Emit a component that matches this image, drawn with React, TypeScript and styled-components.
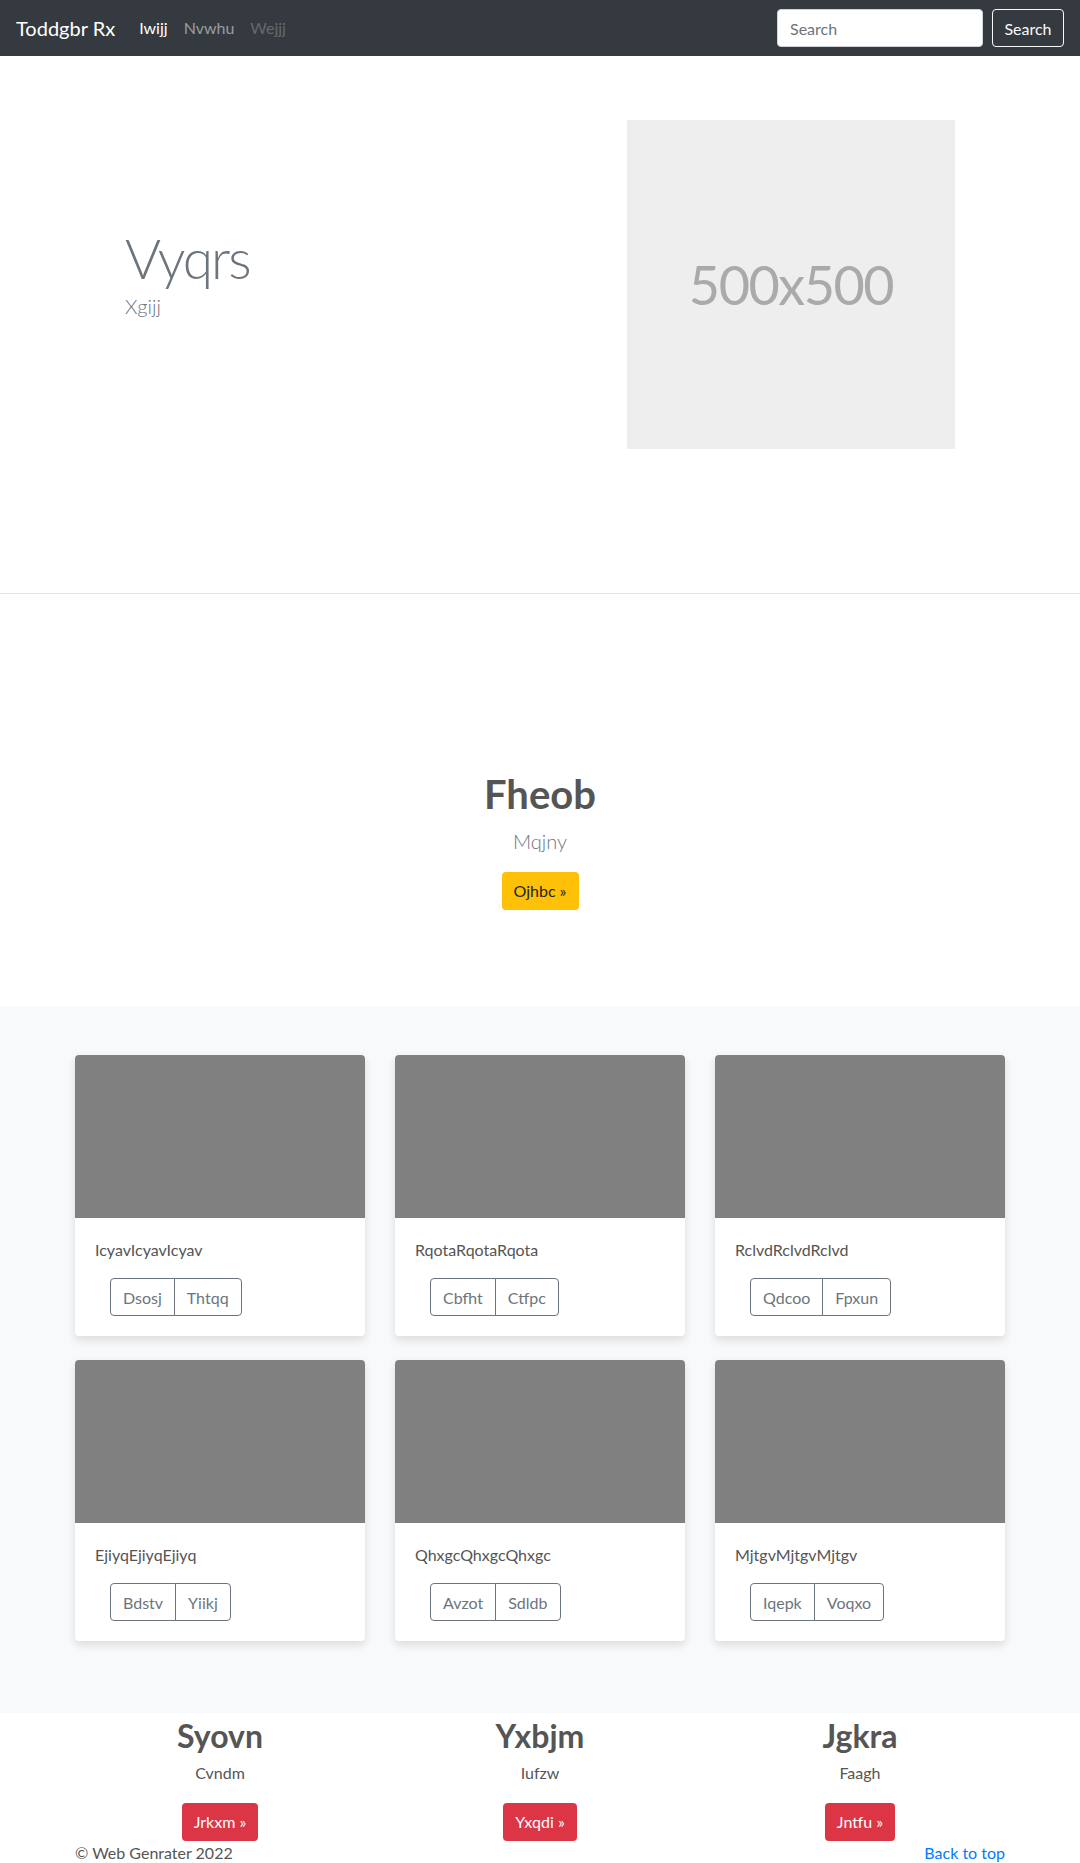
import React from 'react';
import styled, { createGlobalStyle } from 'styled-components';

const GlobalStyle = createGlobalStyle`
  * { box-sizing: border-box; }
  body {
    margin: 0;
    font-family: Lato, "Open Sans", sans-serif;
    font-size: 16px;
    line-height: 1.5;
    color: #212529;
    background: #fff;
  }
`;

const Navbar = styled.nav`
  height: 56px;
  background: #343a40;
  display: flex;
  align-items: center;
  padding: 0 16px;
`;

const Brand = styled.a`
  color: #fff;
  font-size: 20px;
  margin-right: 16px;
  text-decoration: none;
  white-space: nowrap;
`;

const NavLinks = styled.div`
  display: flex;
  flex: 1;
`;

const NavLink = styled.a<{ $state?: 'active' | 'disabled' }>`
  padding: 8px;
  font-size: 16px;
  text-decoration: none;
  color: ${p =>
    p.$state === 'active'
      ? '#fff'
      : p.$state === 'disabled'
      ? 'rgba(255,255,255,.25)'
      : 'rgba(255,255,255,.5)'};
`;

const SearchForm = styled.form`
  display: flex;
  align-items: center;
  gap: 9px;
`;

const SearchInput = styled.input`
  width: 206px;
  height: 38px;
  padding: 6px 12px;
  border: 1px solid #ced4da;
  border-radius: 4px;
  font-family: inherit;
  font-size: 16px;
  color: #495057;
  &::placeholder { color: #6c757d; }
`;

const OutlineLightButton = styled.button`
  height: 38px;
  width: 72px;
  padding: 0;
  background: transparent;
  border: 1px solid #f8f9fa;
  border-radius: 4px;
  color: #f8f9fa;
  font-family: inherit;
  font-size: 16px;
`;

const Hero = styled.section`
  border-bottom: 1px solid #e5e5e5;
`;

const HeroInner = styled.div`
  max-width: 960px;
  margin: 0 auto;
  padding: 64px 65px 144px;
  display: grid;
  grid-template-columns: 1fr 328px;
  align-items: center;
`;

const HeroText = styled.div`
  padding-bottom: 24px;
`;

const DisplayTitle = styled.h1`
  margin: 0;
  font-size: 55px;
  font-weight: 300;
  letter-spacing: -2px;
  line-height: 1.2;
  color: #6c757d;
`;

const HeroLead = styled.p`
  margin: 0;
  font-size: 20px;
  font-weight: 300;
  color: #6c757d;
`;

const Placeholder = styled.div`
  width: 328px;
  height: 329px;
  background: #eee;
  color: #aaa;
  display: flex;
  align-items: center;
  justify-content: center;
  font-size: 54px;
  letter-spacing: -1.5px;
`;

const Feature = styled.section`
  padding: 176px 0 96px;
  text-align: center;
`;

const FeatureTitle = styled.h1`
  margin: 0 0 8px;
  font-size: 40px;
  font-weight: 700;
  line-height: 1.2;
  color: #555;
`;

const Lead = styled.p`
  margin: 0 0 16px;
  font-size: 20px;
  font-weight: 300;
  line-height: 1.5;
  color: #6c757d;
`;

const SolidButton = styled.a<{ $variant: 'warning' | 'danger' }>`
  display: inline-flex;
  align-items: center;
  height: 38px;
  padding: 0 12px;
  border-radius: 4px;
  font-size: 16px;
  text-decoration: none;
  background: ${p => (p.$variant === 'warning' ? '#ffc107' : '#dc3545')};
  color: ${p => (p.$variant === 'warning' ? '#212529' : '#fff')};
`;

const Album = styled.section`
  background: #f8f9fa;
  padding: 49px 0 48px;
`;

const CardGrid = styled.div`
  max-width: 930px;
  margin: 0 auto;
  display: grid;
  grid-template-columns: repeat(3, 1fr);
  column-gap: 30px;
  row-gap: 24px;
  padding-bottom: 24px;
`;

const Card = styled.div`
  background: #fff;
  border-radius: 4px;
  overflow: hidden;
  box-shadow: 0 4px 10px rgba(0, 0, 0, 0.12);
`;

const CardImage = styled.div`
  height: 163px;
  background: #808080;
`;

const CardBody = styled.div`
  padding: 20px;
`;

const CardText = styled.p`
  margin: 0 0 16px;
  font-size: 16px;
  line-height: 24px;
  color: #555;
`;

const ButtonGroup = styled.div`
  display: inline-flex;
  margin-left: 15px;
`;

const GroupButton = styled.button`
  height: 38px;
  padding: 0 12px;
  background: #fff;
  border: 1px solid #6c757d;
  color: #6c757d;
  font-family: inherit;
  font-size: 16px;
  &:first-child { border-radius: 4px 0 0 4px; }
  &:last-child { border-radius: 0 4px 4px 0; margin-left: -1px; }
`;

const Columns = styled.section`
  max-width: 960px;
  margin: 0 auto;
  display: grid;
  grid-template-columns: repeat(3, 1fr);
  text-align: center;
`;

const ColumnTitle = styled.h2`
  margin: 4px 0 6px;
  font-size: 32px;
  font-weight: 700;
  line-height: 1.2;
  color: #555;
`;

const ColumnText = styled.p`
  margin: 0 0 18px;
  font-size: 16px;
  color: #555;
`;

const Footer = styled.footer`
  max-width: 930px;
  margin: 0 auto;
  display: flex;
  justify-content: space-between;
  font-size: 16px;
  line-height: 24px;
  color: #555;
`;

const FooterLink = styled.a`
  color: #007bff;
  text-decoration: none;
`;

const cards = [
  { text: 'IcyavIcyavIcyav', a: 'Dsosj', b: 'Thtqq' },
  { text: 'RqotaRqotaRqota', a: 'Cbfht', b: 'Ctfpc' },
  { text: 'RclvdRclvdRclvd', a: 'Qdcoo', b: 'Fpxun' },
  { text: 'EjiyqEjiyqEjiyq', a: 'Bdstv', b: 'Yiikj' },
  { text: 'QhxgcQhxgcQhxgc', a: 'Avzot', b: 'Sdldb' },
  { text: 'MjtgvMjtgvMjtgv', a: 'Iqepk', b: 'Voqxo' },
];

const columns = [
  { title: 'Syovn', text: 'Cvndm', button: 'Jrkxm' },
  { title: 'Yxbjm', text: 'Iufzw', button: 'Yxqdi' },
  { title: 'Jgkra', text: 'Faagh', button: 'Jntfu' },
];

const App: React.FC = () => (
  <>
    <GlobalStyle />
    <Navbar>
      <Brand href="#">Toddgbr Rx</Brand>
      <NavLinks>
        <NavLink href="#" $state="active">Iwijj</NavLink>
        <NavLink href="#">Nvwhu</NavLink>
        <NavLink href="#" $state="disabled">Wejjj</NavLink>
      </NavLinks>
      <SearchForm onSubmit={e => e.preventDefault()}>
        <SearchInput type="text" placeholder="Search" />
        <OutlineLightButton type="submit">Search</OutlineLightButton>
      </SearchForm>
    </Navbar>

    <Hero>
      <HeroInner>
        <HeroText>
          <DisplayTitle>Vyqrs</DisplayTitle>
          <HeroLead>Xgijj</HeroLead>
        </HeroText>
        <Placeholder>500x500</Placeholder>
      </HeroInner>
    </Hero>

    <Feature>
      <FeatureTitle>Fheob</FeatureTitle>
      <Lead>Mqjny</Lead>
      <SolidButton href="#" $variant="warning">Ojhbc »</SolidButton>
    </Feature>

    <Album>
      <CardGrid>
        {cards.map(c => (
          <Card key={c.text}>
            <CardImage />
            <CardBody>
              <CardText>{c.text}</CardText>
              <ButtonGroup>
                <GroupButton type="button">{c.a}</GroupButton>
                <GroupButton type="button">{c.b}</GroupButton>
              </ButtonGroup>
            </CardBody>
          </Card>
        ))}
      </CardGrid>
    </Album>

    <Columns>
      {columns.map(col => (
        <div key={col.title}>
          <ColumnTitle>{col.title}</ColumnTitle>
          <ColumnText>{col.text}</ColumnText>
          <SolidButton href="#" $variant="danger">{col.button} »</SolidButton>
        </div>
      ))}
    </Columns>

    <Footer>
      <span>© Web Genrater 2022</span>
      <FooterLink href="#">Back to top</FooterLink>
    </Footer>
  </>
);

export default App;
